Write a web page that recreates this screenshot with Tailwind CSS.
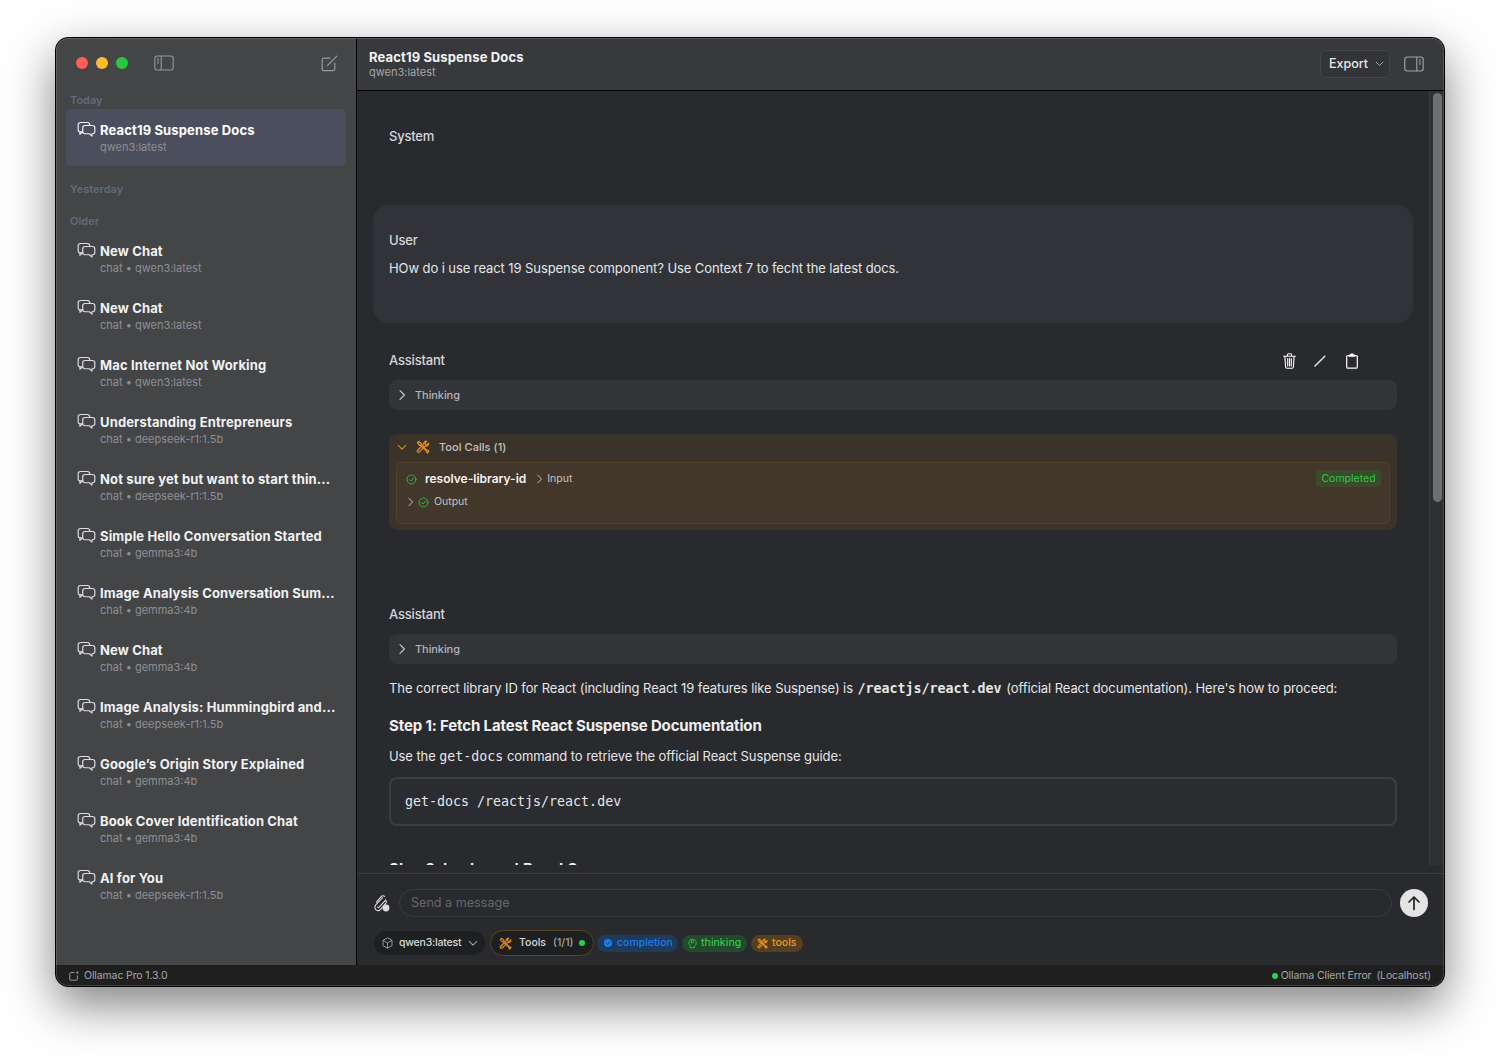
<!DOCTYPE html>
<html lang="en">
<head>
    <meta charset="UTF-8">
    <title>Ollamac Pro</title>
    <script src="https://cdn.jsdelivr.net/npm/@tailwindcss/browser@4"></script>
</head>
<body class="bg-white font-['Inter',sans-serif] w-[1500px] h-[1060px] overflow-hidden pl-[55px] pt-[37px]">
    <!-- Shared icons -->
    <svg class="hidden">
        <symbol id="chat" viewBox="0 0 20 18" fill="none" stroke="currentColor" stroke-width="1.25" stroke-linejoin="round" stroke-linecap="round">
            <path d="M6 11.5H3.6C2.2 11.5 1.2 10.5 1.2 9.2V4C1.2 2.6 2.2 1.6 3.6 1.6H11C12.4 1.6 13.4 2.6 13.4 4V4.6"/>
            <path d="M3 11.5V14L5.6 11.6"/>
            <path d="M8.4 4.8H16.4C17.8 4.8 18.8 5.8 18.8 7.1V11.2C18.8 12.5 17.8 13.5 16.4 13.5H15.8V16L13 13.5H8.4C7 13.5 6 12.5 6 11.2V7.1C6 5.8 7 4.8 8.4 4.8Z"/>
        </symbol>
        <symbol id="tools" viewBox="0 0 16 16" fill="none" stroke="currentColor" stroke-width="1.5" stroke-linejoin="round" stroke-linecap="round">
            <path d="M1.6 3.2L3.2 1.6L6 4V5.6L12.8 12.2L14 12L14.8 13L13 14.8L12 14L12.2 12.8L5.6 6H4Z"/>
            <path d="M14.6 3.6A3.1 3.1 0 0 1 10.6 6.8L3.8 13.6A1.3 1.3 0 0 1 1.9 11.7L8.8 4.9A3.1 3.1 0 0 1 12 1.4L10.4 3.3L11 4.9L12.7 5.4Z"/>
        </symbol>
        <symbol id="check" viewBox="0 0 12 12" fill="none" stroke="currentColor" stroke-width="1" stroke-linecap="round" stroke-linejoin="round">
            <circle cx="6" cy="6" r="4.9"/>
            <path d="M3.8 6.2L5.4 7.8L8.4 4.2"/>
        </symbol>
        <symbol id="right" viewBox="0 0 10 14" fill="none" stroke="currentColor" stroke-width="1.4" stroke-linecap="round" stroke-linejoin="round">
            <path d="M2.5 1.5L8 7L2.5 12.5"/>
        </symbol>
        <symbol id="down" viewBox="0 0 12 8" fill="none" stroke="currentColor" stroke-width="1.3" stroke-linecap="round" stroke-linejoin="round">
            <path d="M1.5 1.5L6 6L10.5 1.5"/>
        </symbol>
    </svg>

    <!-- Window -->
    <div class="relative w-[1390px] h-[950px] flex flex-col rounded-[13px] overflow-hidden border border-black bg-[#292a2e] shadow-[0_18px_48px_rgba(0,0,0,0.5)]">
        <div class="flex flex-1 min-h-0">
            <!-- Sidebar -->
            <aside class="w-[301px] shrink-0 bg-[#444547] border-r border-black flex flex-col px-[10px]">
                <div class="h-[54px] shrink-0 flex items-center pl-[10px] pr-[8px] pb-[4px]">
                    <span class="w-3 h-3 rounded-full bg-[#ff5f57]"></span>
                    <span class="w-3 h-3 rounded-full bg-[#febc2e] ml-2"></span>
                    <span class="w-3 h-3 rounded-full bg-[#28c840] ml-2"></span>
                    <svg class="w-[20px] h-[16px] ml-[26px] text-[#98999b]" viewBox="0 0 20 16" fill="none" stroke="currentColor" stroke-width="1.1">
                        <rect x="0.8" y="1" width="18.4" height="14" rx="2.5"/>
                        <path d="M7.2 1V15"/>
                        <path d="M3 4H5M3 6H5M3 8H5" stroke-width="1"/>
                    </svg>
                    <svg class="w-[17px] h-[17px] ml-auto text-[#98999b]" viewBox="0 0 17 17" fill="none" stroke="currentColor" stroke-width="1.2" stroke-linecap="round" stroke-linejoin="round">
                        <path d="M13.8 8V14C13.8 15 13.1 15.7 12.1 15.7H2.9C1.9 15.7 1.2 15 1.2 14V4.9C1.2 3.9 1.9 3.2 2.9 3.2H9"/>
                        <path d="M6.5 10.5L15.8 1.2"/>
                    </svg>
                </div>
                <div class="h-[17px] pl-1 text-[11px] leading-4 font-semibold text-[#636a7a]">Today</div>
                <div class="h-[57px] shrink-0 rounded-[5px] bg-[#4b4e5c] pl-[11px] pt-[13px]">
                    <div class="flex items-center h-4 text-[13px] leading-4 font-bold tracking-[0.14px] text-white"><svg class="w-[19px] h-[17px] mr-[4px] -mt-[2px] text-[#f0f0f1]"><use href="#chat"/></svg>React19 Suspense Docs</div>
                    <div class="ml-[23px] mt-[1px] text-[11px] leading-4 text-[#8d8f96]">qwen3:latest</div>
                </div>
                <div class="mt-[15px] h-4 pl-1 text-[11px] leading-4 font-semibold text-[#636a7a]">Yesterday</div>
                <div class="mt-4 h-[17px] pl-1 text-[11px] leading-4 font-semibold text-[#636a7a]">Older</div>
                <div id="chat-list" class="flex flex-col"></div>
            </aside>

            <!-- Main column -->
            <main class="flex-1 min-w-0 flex flex-col">
                <header class="h-[53px] shrink-0 bg-[#38393c] border-b border-black flex items-center pl-3 pr-[20px]">
                    <div>
                        <div class="text-[13px] leading-4 font-bold tracking-[0.14px] text-[#f2f2f3]">React19 Suspense Docs</div>
                        <div class="text-[11px] leading-[14px] text-[#a5a6a8]">qwen3:latest</div>
                    </div>
                    <button class="ml-auto w-[70px] h-[28px] rounded-[6px] border border-[#45464a] bg-[#333437] flex items-center pl-2 text-[12.5px] font-medium text-[#e8e8e9]">Export<svg class="w-[9px] h-[6px] ml-[7px] text-[#a9aaac]"><use href="#down"/></svg></button>
                    <svg class="w-[20px] h-[16px] ml-[14px] text-[#a3a4a6]" viewBox="0 0 20 16" fill="none" stroke="currentColor" stroke-width="1.1">
                        <rect x="0.8" y="1" width="18.4" height="14" rx="2.5"/>
                        <path d="M12.8 1V15"/>
                        <path d="M15 4H17M15 6H17M15 8H17" stroke-width="1"/>
                    </svg>
                </header>

                <div class="h-[774px] shrink-0 flex overflow-hidden">
                    <!-- Messages -->
                    <div class="w-[1072px] shrink-0 px-4 pt-[37px] overflow-hidden text-[13px] leading-4 tracking-[-0.085px] text-[#e6e6e7]">
                        <div class="px-4 font-medium tracking-[-0.2px] text-[#d6d6d8]">System</div>

                        <div class="mt-[61px] h-[118px] rounded-[16px] bg-[#323338] px-4 pt-[27px]">
                            <div class="font-medium tracking-[-0.2px] text-[#d6d6d8]">User</div>
                            <p class="mt-3">HOw do i use react 19 Suspense component? Use Context 7 to fecht the latest docs.</p>
                        </div>

                        <div class="mt-[29px] px-4">
                            <div class="flex items-center h-4">
                                <span class="font-medium tracking-[-0.2px] text-[#d6d6d8]">Assistant</span>
                                <div class="ml-auto mr-[39px] mt-[2px] flex items-center gap-[18px] text-white">
                                    <svg class="w-[13px] h-[16px]" viewBox="0 0 13 16" fill="none" stroke="currentColor" stroke-width="1.1" stroke-linecap="round" stroke-linejoin="round">
                                        <path d="M0.7 3.2H12.3M4.4 3V1.9C4.4 1.2 4.9 0.8 5.5 0.8H7.5C8.1 0.8 8.6 1.2 8.6 1.9V3"/>
                                        <path d="M1.9 3.4L2.6 14C2.7 14.7 3.1 15.2 3.9 15.2H9.1C9.9 15.2 10.3 14.7 10.4 14L11.1 3.4"/>
                                        <path d="M4.7 5.6V13M6.5 5.6V13M8.3 5.6V13"/>
                                    </svg>
                                    <svg class="w-[12px] h-[12px]" viewBox="0 0 12 12" fill="none" stroke="#e2e2e3" stroke-width="1.5" stroke-linecap="round">
                                        <path d="M1 11L10.8 1.2"/>
                                    </svg>
                                    <svg class="w-[12px] h-[16px] ml-[2px]" viewBox="0 0 12 16" fill="none" stroke="currentColor" stroke-width="1.2" stroke-linejoin="round">
                                        <path d="M3.2 2.6H2C1.2 2.6 0.7 3.1 0.7 3.9V13.9C0.7 14.7 1.2 15.2 2 15.2H10C10.8 15.2 11.3 14.7 11.3 13.9V3.9C11.3 3.1 10.8 2.6 10 2.6H8.8"/>
                                        <path d="M3.4 3.2V2.2H5V1H7V2.2H8.6V3.2Z" fill="currentColor"/>
                                    </svg>
                                </div>
                            </div>
                            <div class="mt-3 h-[30px] rounded-[8px] bg-[#333438] flex items-center pl-[9px] text-[11px] font-medium text-[#b5b5b8]"><svg class="w-2 h-[12px] text-[#c8c8ca]"><use href="#right"/></svg><span class="ml-[9px]">Thinking</span></div>

                            <div class="mt-6 h-[96px] rounded-[8px] bg-[#3b3229] px-[7px] tracking-normal">
                                <div class="h-[26px] mb-[2px] flex items-center text-[11px] font-medium tracking-[0.05px] text-[#c4c2bf]">
                                    <svg class="w-[10px] h-[7px] ml-[1px] text-[#e08e1a]"><use href="#down"/></svg>
                                    <svg class="w-[14px] h-[14px] ml-[9px] text-[#e08e1a]"><use href="#tools"/></svg>
                                    <span class="ml-[9px]">Tool Calls (1)</span>
                                </div>
                                <div class="h-[62px] rounded-[5px] border border-[#53402a] bg-[#43362a] pl-[9px] pr-[8px] pt-[7px]">
                                    <div class="flex items-center h-[18px]">
                                        <svg class="w-[11px] h-[11px] text-[#2bc048]"><use href="#check"/></svg>
                                        <span class="ml-[8px] text-[12px] font-semibold text-[#f4f3f1]">resolve-library-id</span>
                                        <svg class="w-[7px] h-[10px] ml-[10px] text-[#c4c2bf]"><use href="#right"/></svg>
                                        <span class="ml-[4px] text-[10.5px] text-[#c4c2bf]">Input</span>
                                        <span class="ml-auto self-start w-[65px] h-[17px] rounded-[4px] bg-[#3c4a2c] text-center text-[10.5px] leading-[17px] text-[#2fc64b]">Completed</span>
                                    </div>
                                    <div class="flex items-center h-[14px] mt-[7px] text-[10.5px] text-[#c4c2bf]">
                                        <svg class="w-[7px] h-[10px] ml-[1px] text-[#c4c2bf]"><use href="#right"/></svg>
                                        <svg class="w-[11px] h-[11px] ml-[4px] text-[#2bc048]"><use href="#check"/></svg>
                                        <span class="ml-[5px]">Output</span>
                                    </div>
                                </div>
                            </div>

                            <div class="mt-[76px] font-medium tracking-[-0.2px] text-[#d6d6d8]">Assistant</div>
                            <div class="mt-3 h-[30px] rounded-[8px] bg-[#333438] flex items-center pl-[9px] text-[11px] font-medium text-[#b5b5b8]"><svg class="w-2 h-[12px] text-[#c8c8ca]"><use href="#right"/></svg><span class="ml-[9px]">Thinking</span></div>

                            <p class="mt-4 whitespace-nowrap">The correct library ID for React (including React 19 features like Suspense) is <code class="ml-[1px] mr-[1px] font-['DejaVu_Sans_Mono',monospace] text-[13.3px] leading-none tracking-normal font-bold">/reactjs/react.dev</code> (official React documentation). Here's how to proceed:</p>
                            <h3 class="mt-[18px] text-[15px] leading-6 font-bold tracking-[-0.14px] text-[#f0f0f1]">Step 1: Fetch Latest React Suspense Documentation</h3>
                            <p class="mt-[10px]">Use the <code class="font-['DejaVu_Sans_Mono',monospace] text-[13.3px] leading-none tracking-normal">get-docs</code> command to retrieve the official React Suspense guide:</p>
                            <pre class="mt-[13px] h-[49px] rounded-[8px] border-2 border-[#3c3d41] bg-[#2b2c30] pl-[14px] pt-[15px] font-['DejaVu_Sans_Mono',monospace] text-[13.3px] leading-4 tracking-normal text-[#e6e6e7]">get-docs /reactjs/react.dev</pre>
                            <h3 class="mt-[31px] text-[15px] leading-6 font-bold tracking-[-0.14px] text-[#f0f0f1]">Step 2: Implement React Suspense</h3>
                        </div>
                    </div>
                    <!-- Scrollbar -->
                    <div class="flex-1 bg-[#2f3033] border-l border-[#3c3d40] pt-[2px] pl-[3px]">
                        <div class="w-[9px] h-[409px] rounded-full bg-[#6e6f72]"></div>
                    </div>
                </div>

                <!-- Composer -->
                <div class="flex-1 mt-[8px] border-t border-[#3b3c40] pl-4 pr-4">
                    <div class="flex items-center h-[28px] mt-[15px]">
                        <svg class="w-[17px] h-[18px] text-[#dcdcdd] shrink-0" viewBox="0 0 17 18" fill="none" stroke="currentColor" stroke-width="1.1" stroke-linecap="round">
                            <path d="M9.5 3.6L3 10.6C1.4 12.4 1.6 14.6 3 15.8C4.4 17 6.3 16.8 7.6 15.4L12.6 9.6C13.6 8.4 13.4 7 12.6 6.2"/>
                            <path d="M11.6 2.4C10.6 1.4 9.2 1.5 8.2 2.6L3.4 8.2"/>
                            <path d="M12.6 6.2L6.2 13.2C5.6 13.8 4.9 13.6 4.6 13.2"/>
                            <circle cx="13" cy="14" r="3.4" fill="#dcdcdd" stroke="none"/>
                        </svg>
                        <div class="ml-[9px] w-[993px] h-[28px] rounded-full border border-[#3a3b3f] pl-[11px] pt-px flex items-center text-[12.6px] text-[#66676b]">Send a message</div>
                        <div class="ml-[8px] w-[28px] h-[28px] rounded-full bg-[#e4e4e5] flex items-center justify-center">
                            <svg class="w-[14px] h-[16px] text-[#1f2023]" viewBox="0 0 14 16" fill="none" stroke="currentColor" stroke-width="1.7" stroke-linecap="round" stroke-linejoin="round">
                                <path d="M7 14.5V2M2 7L7 2L12 7"/>
                            </svg>
                        </div>
                    </div>
                    <div class="flex items-center h-[26px] mt-[13px] text-[10.5px] font-medium">
                        <div class="w-[113px] h-[26px] rounded-full bg-[#1e1f21] border border-[#2a2b2e] flex items-center pl-[8px] text-[#d8d8d9]">
                            <svg class="w-[11px] h-[12px] text-[#a0a1a3]" viewBox="0 0 11 12" fill="none" stroke="currentColor" stroke-width="0.9" stroke-linejoin="round">
                                <path d="M5.5 0.8L10 3.3V8.7L5.5 11.2L1 8.7V3.3Z"/>
                                <path d="M1 3.3L5.5 5.8L10 3.3M5.5 5.8V11.2"/>
                            </svg>
                            <span class="ml-[6px] tracking-[-0.2px]">qwen3:latest</span>
                            <svg class="w-[10px] h-[7px] ml-[7px] text-[#a0a1a3]"><use href="#down"/></svg>
                        </div>
                        <div class="ml-[4px] w-[104px] h-[26px] rounded-full bg-[#1e1f21] border border-[#5b4223] flex items-center pl-[8px] text-[#d8d8d9]">
                            <svg class="w-[13px] h-[13px] text-[#d98a1c]"><use href="#tools"/></svg>
                            <span class="ml-[7px]">Tools</span>
                            <span class="ml-[7px] text-[#a8a8aa]">(1/1)</span>
                            <span class="ml-[6px] w-[6px] h-[6px] rounded-full bg-[#2bd04d]"></span>
                        </div>
                        <div class="ml-[3px] w-[81px] h-[17px] rounded-full bg-[#1d3a5f] flex items-center pl-[7px] text-[#1a7fe8]">
                            <span class="w-[8px] h-[8px] rounded-full bg-[#1a7fe8] mr-[5px] flex items-center justify-center">
                                <svg class="w-[6px] h-[6px]" viewBox="0 0 6 6" fill="none" stroke="#1d3a5f" stroke-width="1"><path d="M1 3L2.6 4.4L5 1.4"/></svg>
                            </span>completion
                        </div>
                        <div class="ml-[4px] w-[65px] h-[17px] rounded-full bg-[#234a2c] flex items-center pl-[6px] text-[#2fc64b]">
                            <svg class="w-[9px] h-[11px] mr-[4px]" viewBox="0 0 9 10" fill="none" stroke="currentColor" stroke-width="0.9">
                                <path d="M4.5 0.8C2.2 0.8 0.8 2.3 0.8 4.4C0.8 5.8 1.5 6.6 2.2 7.2V9.2H6.4V7.6C7.6 7.2 8.2 6 8.2 4.4C8.2 2.3 6.8 0.8 4.5 0.8ZM3.4 1V5M5.2 1V5"/>
                            </svg>thinking
                        </div>
                        <div class="ml-[4px] w-[52px] h-[17px] rounded-full bg-[#54401f] flex items-center pl-[6px] text-[#e8961f]">
                            <svg class="w-[11px] h-[11px] mr-[4px]"><use href="#tools"/></svg>tools
                        </div>
                    </div>
                </div>
            </main>
        </div>

        <!-- Status bar -->
        <footer class="h-[21px] shrink-0 bg-[#1f1f20] flex items-center pl-[13px] pr-[13px] text-[10.5px] tracking-[-0.12px] text-[#a6a7a9]">
            <svg class="w-[10px] h-[10px] text-[#a6a7a9]" viewBox="0 0 10 10" fill="none" stroke="currentColor" stroke-width="0.9" stroke-linejoin="round">
                <path d="M5.6 1.6H1.8C1.2 1.6 0.8 2 0.8 2.6V8.2C0.8 8.8 1.2 9.2 1.8 9.2H7.4C8 9.2 8.4 8.8 8.4 8.2V4.4"/>
                <circle cx="8.4" cy="1.6" r="1.1" fill="currentColor" stroke="none"/>
            </svg>
            <span class="ml-[5px]">Ollamac Pro 1.3.0</span>
            <span class="ml-auto w-[6px] h-[6px] rounded-full bg-[#2bd04d]"></span>
            <span class="ml-[3px]">Ollama Client Error</span>
            <span class="ml-[5px]">(Localhost)</span>
        </footer>

        <!-- Inner edge highlight of the window -->
        <div class="absolute inset-0 rounded-[12px] border border-white/15 pointer-events-none"></div>
    </div>

    <script>
        // Older chats in the sidebar
        const chats = [
            ['New Chat', 'chat • qwen3:latest'],
            ['New Chat', 'chat • qwen3:latest'],
            ['Mac Internet Not Working', 'chat • qwen3:latest'],
            ['Understanding Entrepreneurs', 'chat • deepseek-r1:1.5b'],
            ['Not sure yet but want to start thin...', 'chat • deepseek-r1:1.5b'],
            ['Simple Hello Conversation Started', 'chat • gemma3:4b'],
            ['Image Analysis Conversation Sum...', 'chat • gemma3:4b'],
            ['New Chat', 'chat • gemma3:4b'],
            ['Image Analysis: Hummingbird and...', 'chat • deepseek-r1:1.5b'],
            ['Google’s Origin Story Explained', 'chat • gemma3:4b'],
            ['Book Cover Identification Chat', 'chat • gemma3:4b'],
            ['AI for You', 'chat • deepseek-r1:1.5b'],
        ];
        document.getElementById('chat-list').innerHTML = chats.map(([title, sub]) => `
            <div class="h-[57px] shrink-0 pl-[11px] pt-[13px]">
                <div class="flex items-center h-4 text-[13px] leading-4 font-bold tracking-[0.14px] text-[#f1f1f2] whitespace-nowrap"><svg class="w-[19px] h-[17px] mr-[4px] -mt-[2px] text-[#dcdcde]"><use href="#chat"/></svg>${title}</div>
                <div class="ml-[23px] mt-[1px] text-[11px] leading-4 text-[#8d8f96]">${sub}</div>
            </div>`).join('');
    </script>
</body>
</html>
